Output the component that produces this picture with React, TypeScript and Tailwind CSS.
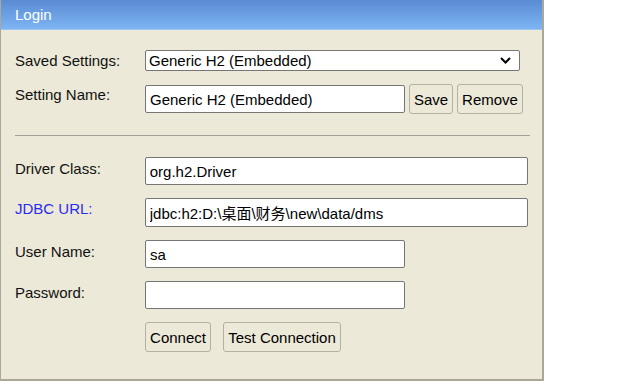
export default function App() {
  const input =
    'h-[28px] bg-white border border-[#767676] rounded-[2px] pl-[4px] text-[15px] text-black outline-none';
  const btn =
    'h-[30px] bg-[#ece9d8] border border-[#b4b1a4] rounded-[3px] text-[15px] leading-[17px] text-black';

  return (
    <div className="min-h-screen bg-white font-['Liberation_Sans','Noto_Sans_CJK_SC',sans-serif] text-[15px] leading-[17px] text-[#111]">
      <div className="w-[544px] h-[381px] bg-[#ece9d8] border-l border-r-2 border-b-2 border-[#aca899]">
        <div className="h-[30px] bg-gradient-to-b from-[#5a8bd3] to-[#7db5f4] border-b border-[#9dc4f0] flex items-center pl-[14px] text-white text-[15px]">
          Login
        </div>

        <div className="px-[14px]">
          <div className="mt-[20px] flex items-center">
            <span className="w-[130px]">Saved Settings:</span>
            <div className="relative">
              <select
                className="appearance-none w-[375px] h-[21px] bg-white border border-[#767676] rounded-[2px] pl-[3px] text-[15px] text-black outline-none"
                defaultValue="h2"
              >
                <option value="h2">Generic H2 (Embedded)</option>
              </select>
              <svg
                className="absolute right-[9px] top-[7px] pointer-events-none"
                width="11"
                height="7"
                viewBox="0 0 11 7"
              >
                <path d="M1 1l4.5 4.5L10 1" fill="none" stroke="#000" strokeWidth="2" />
              </svg>
            </div>
          </div>

          <div className="mt-[13px] flex items-start">
            <span className="w-[130px] pt-[2px]">Setting Name:</span>
            <input className={`${input} w-[260px] mt-[1px]`} value="Generic H2 (Embedded)" readOnly />
            <button className={`${btn} ml-[4px] w-[44px]`}>Save</button>
            <button className={`${btn} ml-[4px] w-[66px]`}>Remove</button>
          </div>

          <div className="mt-[21px] w-[515px] border-t border-[#a3a197]" />

          <div className="mt-[21px] flex flex-col gap-[13px]">
            <div className="flex items-start">
              <span className="w-[130px] pt-[3px]">Driver Class:</span>
              <input className={`${input} w-[384px]`} value="org.h2.Driver" readOnly />
            </div>
            <div className="flex items-start">
              <span className="w-[130px] pt-[2px] text-[#2b2bf0]">JDBC URL:</span>
              <input className={`${input} w-[384px] h-[29px]`} value="jdbc:h2:D:\桌面\财务\new\data/dms" readOnly />
            </div>
            <div className="flex items-start">
              <span className="w-[130px] pt-[3px]">User Name:</span>
              <input className={`${input} w-[260px]`} value="sa" readOnly />
            </div>
            <div className="flex items-start">
              <span className="w-[130px] pt-[3px]">Password:</span>
              <input className={`${input} w-[260px]`} type="password" value="" readOnly />
            </div>
            <div className="flex items-start gap-[12px] pl-[130px]">
              <button className={`${btn} w-[66px]`}>Connect</button>
              <button className={`${btn} w-[118px]`}>Test Connection</button>
            </div>
          </div>
        </div>
      </div>
    </div>
  );
}
